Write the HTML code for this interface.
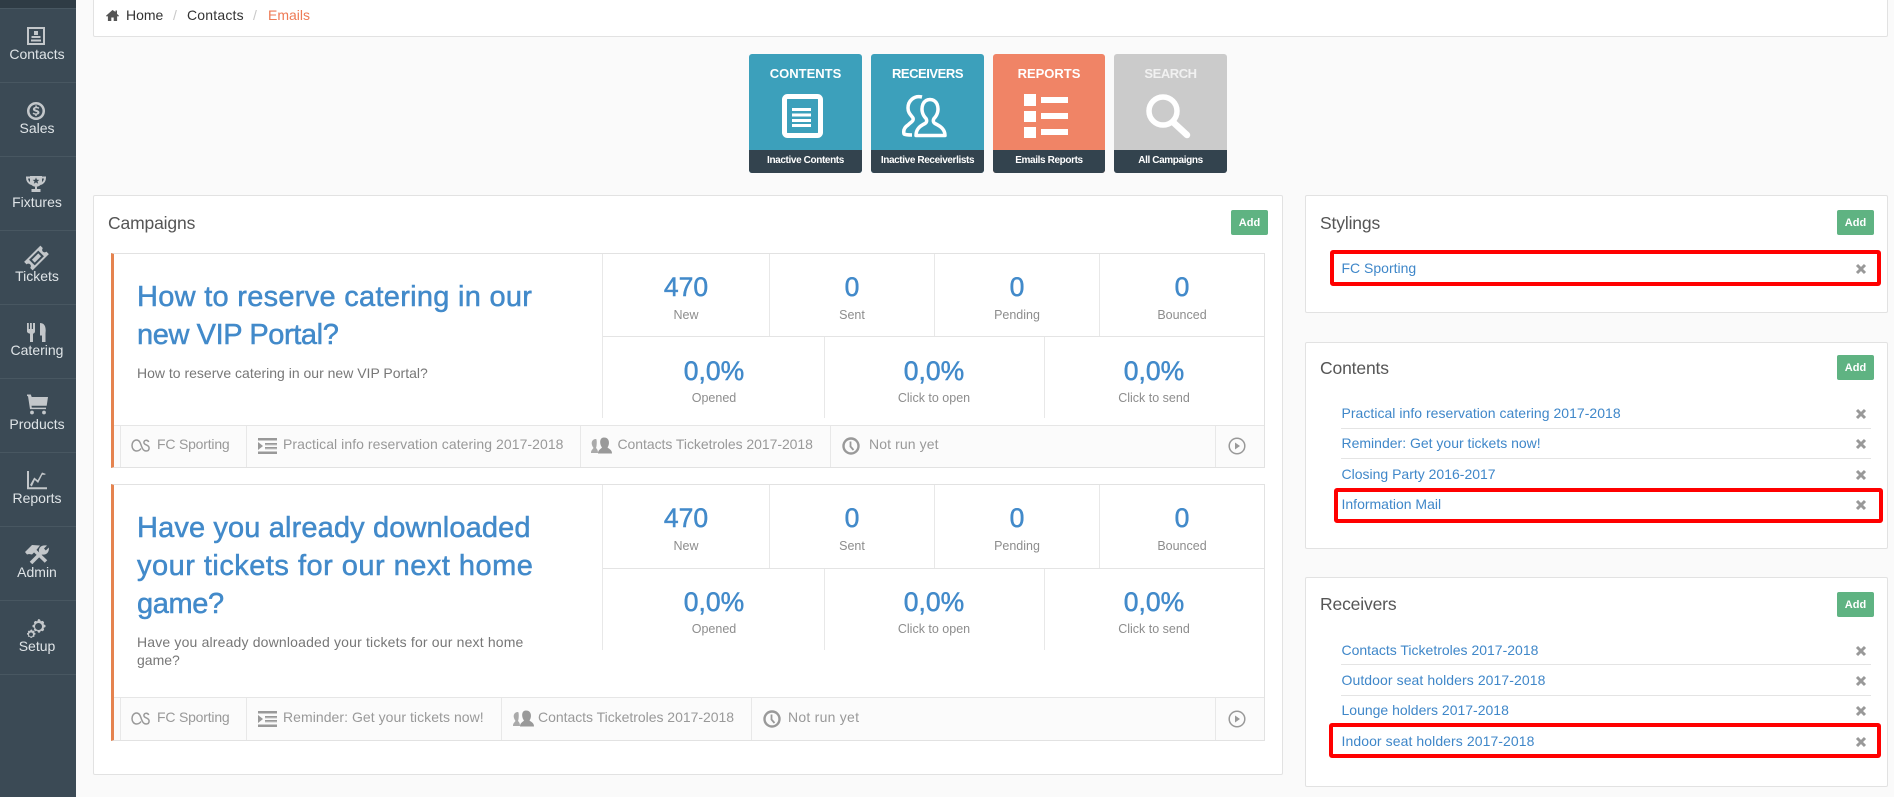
<!DOCTYPE html>
<html><head><meta charset="utf-8"><title>Emails</title>
<style>
html,body{margin:0;padding:0;width:1894px;height:797px;overflow:hidden;background:#fafafa;font-family:"Liberation Sans",sans-serif}
div,span,a,svg{position:absolute;box-sizing:border-box}
.t{white-space:nowrap;line-height:20px;height:20px}
.c{text-align:center;width:240px}
.nav{color:#dfe4e7;font-size:14px;left:-83px;}
.sep{left:0;width:76px;height:1px;background:#485761}
.panel{background:#fff;border:1px solid #e2e2e2;border-radius:2px}
.ptitle{font-size:17.5px;color:#555;letter-spacing:-.15px;line-height:24px;height:24px}
.add{background:#5fb382;color:#fff;font-size:11px;font-weight:bold;text-align:center;line-height:27px;height:25px;width:37px;border-radius:2px}
.tile{top:54px;height:119px;width:113px;border-radius:3px;overflow:hidden}
.tile .foot{left:0;right:0;top:96px;height:23px;background:#33434e;color:#fff;font-size:10px;font-weight:bold;text-align:center;line-height:21px;white-space:nowrap;letter-spacing:-.38px}
.tile .head{left:0;right:0;top:10px;color:#fff;font-size:13px;font-weight:bold;text-align:center;line-height:20px;white-space:nowrap}
.card{left:111px;width:1154px;background:#fff;border-top:1px solid #e2e2e2;border-right:1px solid #e2e2e2;border-bottom:1px solid #e2e2e2;border-left:3px solid #e5834f}
.h{color:#428aca;font-size:29px;line-height:38px;height:38px;white-space:nowrap;-webkit-text-stroke:.5px #428aca}
.sub{color:#777;font-size:14px;line-height:18px;height:18px;white-space:nowrap;left:137px}
.num{color:#428aca;font-size:26.5px;line-height:30px;height:30px;text-align:center;width:200px;-webkit-text-stroke:.5px #428aca}
.lab{color:#8d8d8d;font-size:12.5px;line-height:16px;height:16px;text-align:center;width:200px}
.v{width:1px;background:#e8e8e8}
.hl{height:1px;background:#e4e4e4}
.foot2{left:114px;width:1150px;background:#fbfbfb;border-top:1px solid #e6e6e6}
.f{color:#999;font-size:14px}
.lnk{color:#3f87c9;font-size:14px;left:1341.5px}
.red{border:4px solid #f00;border-radius:3px}
</style></head><body>

<div style="left:0;top:0;width:76px;height:797px;background:#3b4a55"></div>
<div style="left:0;top:0;width:76px;height:8px;background:#2f3c45"></div>
<div class="sep" style="top:8px"></div><div class="sep" style="top:82px"></div><div class="sep" style="top:156px"></div><div class="sep" style="top:230px"></div><div class="sep" style="top:304px"></div><div class="sep" style="top:378px"></div><div class="sep" style="top:452px"></div><div class="sep" style="top:526px"></div><div class="sep" style="top:600px"></div><div class="sep" style="top:674px"></div>

<div class="t c nav" style="top:44px">Contacts</div>
<div class="t c nav" style="top:118px">Sales</div>
<div class="t c nav" style="top:192px">Fixtures</div>
<div class="t c nav" style="top:266px">Tickets</div>
<div class="t c nav" style="top:340px">Catering</div>
<div class="t c nav" style="top:414px">Products</div>
<div class="t c nav" style="top:488px">Reports</div>
<div class="t c nav" style="top:562px">Admin</div>
<div class="t c nav" style="top:636px">Setup</div>

<svg style="left:0;top:0" width="76" height="797" fill="#c3c7ca">
<path fill-rule="evenodd" d="M27 27h18v18H27zM29 29v14h14V29z"/><path d="M34 31h4v4h-4zM31.500 36h9v2h-9zM31 39.500h10v2H31z"/>
<path fill-rule="evenodd" d="M36 102a9 9 0 1 0 .01 0zM36 104.500a6.500 6.500 0 1 1-.01 0z"/><path d="M35.200 105.500h1.600v1.300c1.100.1 2 .4 2.500.9l-.8 1.300c-.6-.5-1.300-.7-2.200-.7-.8 0-1.200.3-1.200.7 0 1.200 4.400.7 4.400 3.500 0 1.300-1 2.100-2.700 2.300v1.200h-1.600v-1.200c-1-.1-2-.5-2.600-1l.8-1.300c.7.500 1.500.9 2.500.9.900 0 1.400-.3 1.400-.8 0-1.300-4.400-.7-4.400-3.400 0-1.200.9-2.100 2.500-2.300z"/>
<path d="M30 176h12v5.500c0 3.200-2.800 5.200-6 5.200s-6-2-6-5.200zM35 186h2v3h-2zM31.500 189h9v3h-9z"/>
<path fill="none" stroke="#c3c7ca" stroke-width="2" d="M30 177.500h-3c0 3.500 1.500 5.500 4.500 6.500M42 177.500h3c0 3.500-1.500 5.500-4.500 6.500"/>
<path fill="#3b4a55" d="M36 177.500l1 2.300 2.400.1-1.900 1.500.7 2.400-2.200-1.400-2.200 1.400.7-2.400-1.900-1.500 2.400-.1z"/>
<g transform="rotate(-45 36.500 258)"><path d="M25 252h23v3.500a2.500 2.500 0 0 0 0 5v3.500H25v-3.500a2.500 2.500 0 0 0 0-5z"/><rect x="30" y="254" width="13" height="8" fill="#3b4a55"/><rect x="32" y="256" width="9" height="4"/></g>
<path d="M27 323h1.800v6h1.200v-6h1.800v6h1.200v-6H35v8.500c0 1-1 1.800-2 2.200V342h-3v-8.300c-1.500-.4-3-1.200-3-2.200zM40 323c2.800 0 5.700 1.500 5.700 7.500l-.2 3-.0 8.500H42v-6.500h-2z"/>
<path d="M27 394.500h3.800l.9 2.500H48l-1.300 8.800H31.500l.3 1.800H46v1.500H30l-2-13H27z"/><circle cx="32" cy="412.500" r="1.900"/><circle cx="44" cy="412.500" r="1.900"/>
<path d="M27 471h2v16.200h18v2H27z"/><path d="M30 485l4.200-7.500 3.500 2.800L42 472.500l4 1.500-1.200.8-2.500 0-4.200 8.200-3.300-3-3 6.500z"/>
<path d="M25 552l7-7 8 .5-4 5-4 4-3-.5-2 .5z"/>
<path fill="none" stroke="#c3c7ca" stroke-width="3.600" d="M33 549l13 12.500M43 551L31 563"/>
<path d="M39 552c-.8-4 2-7.500 8-6.500l-3 3 1.800 2 3-3c.8 4.500-2.500 8-7 7z"/>
<path fill-rule="evenodd" d="M38.500 619l1.500.5.800 1.800 2-.4 1.300 1.300-.5 2 1.900 1-.0 1.800-1.900.9.500 2-1.300 1.300-2-.5-.9 1.900h-1.800l-.9-1.900-2 .5-1.300-1.300.5-2-1.900-.9v-1.800l1.900-1-.5-2 1.300-1.300 2 .5.8-1.900zM38.500 623a3.500 3.500 0 1 0 .01 0z"/><path fill-rule="evenodd" d="M31 629.500l1.100.2.500 1.200 1.200-.3.800.8-.3 1.200 1.200.6v1.200l-1.200.6.300 1.200-.8.800-1.200-.3-.6 1.200H30.500l-.6-1.200-1.200.3-.8-.8.300-1.200-1.200-.6v-1.200l1.200-.6-.3-1.200.8-.8 1.200.3zM31 632.500a2 2 0 1 0 .01 0z"/>
</svg>

<!-- breadcrumb -->
<div class="panel" style="left:93px;top:-2px;width:1795px;height:39px"></div>
<svg style="left:106px;top:9px" width="13" height="12" fill="#555"><path d="M6.500 1L0 6.700l1 1 .9-.8V12h3.400V8.500h2.400V12h3.400V6.900l.9.800 1-1-2-1.800V1.500H9.500v1.400z"/></svg>
<div class="t" style="left:126px;top:5px;font-size:14px;color:#333">Home</div>
<div class="t" style="left:173px;top:5px;font-size:14px;color:#c8c8c8">/</div>
<div class="t" style="left:187px;top:5px;font-size:14px;color:#333;letter-spacing:.2px">Contacts</div>
<div class="t" style="left:253px;top:5px;font-size:14px;color:#c8c8c8">/</div>
<div class="t" style="left:268px;top:5px;font-size:14px;color:#ee7a55">Emails</div>

<!-- tiles -->
<div class="tile" style="left:749px;background:#3ca0bb"><div class="head">CONTENTS</div><div class="foot">Inactive Contents</div>
<svg style="left:0;top:0" width="113" height="96" fill="none" stroke="#fff"><rect x="35.500" y="42.500" width="36" height="39" rx="3" stroke-width="5"/><path d="M43 55.500h19M43 61h19M43 66.500h19M43 71.500h19" stroke-width="3"/></svg></div>
<div class="tile" style="left:871px;background:#3ca0bb"><div class="head" style="letter-spacing:-.45px">RECEIVERS</div><div class="foot">Inactive Receiverlists</div>
<svg style="left:0;top:0" width="113" height="96" fill="none" stroke="#fff" stroke-width="3.500" stroke-linejoin="round"><path d="M45 81.500H74C74 75 69 72 64 69.500C62 68.500 62 66 63 64.500C67 60.500 68 55 66 50C63 44 55 44 52 50C50 55 51 60.500 55 64.500C56 66 56 68.500 54 69.500C49 72 45 75 45 81.500Z"/><path d="M51 43C43 41 37 47 37 54C37 59 40 61 42 64C43 67 40 68 37 71C34 73 32 76 33 80C35 81 38 81 41 81"/></svg></div>
<div class="tile" style="left:993px;width:112px;background:#f08466"><div class="head">REPORTS</div><div class="foot">Emails Reports</div>
<svg style="left:0;top:0" width="112" height="96" fill="#fff"><path d="M31 40h12v12H31zM31 57h12v11H31zM31 73h12v11H31zM48 43h27v6H48zM48 59h27v6H48zM48 75h27v6H48z"/></svg></div>
<div class="tile" style="left:1114px;background:#cbcbcb"><div class="head" style="color:#f1f1f1;letter-spacing:-.45px">SEARCH</div><div class="foot">All Campaigns</div>
<svg style="left:0;top:0" width="113" height="96" fill="none" stroke="#fff"><circle cx="49" cy="57" r="14" stroke-width="5.500"/><path d="M60 69l13 12" stroke-width="6.500" stroke-linecap="round"/></svg></div>

<!-- campaigns panel -->
<div class="panel" style="left:93px;top:195px;width:1190px;height:580px"></div>
<div class="t ptitle" style="left:108px;top:211px">Campaigns</div>
<div class="add" style="left:1231px;top:210px">Add</div>

<!-- card 1 -->
<div class="card" style="top:253px;height:215px"></div>
<div class="h" style="left:137px;top:278px;letter-spacing:.28px">How to reserve catering in our</div>
<div class="h" style="left:137px;top:316px;letter-spacing:-.4px">new VIP Portal?</div>
<div class="sub" style="top:364px">How to reserve catering in our new VIP Portal?</div>
<div class="v" style="left:602px;top:254px;height:164px"></div>
<div class="v" style="left:769px;top:254px;height:82px"></div><div class="v" style="left:934px;top:254px;height:82px"></div><div class="v" style="left:1099px;top:254px;height:82px"></div>
<div class="hl" style="left:603px;top:336px;width:661px"></div>
<div class="v" style="left:824px;top:337px;height:81px"></div><div class="v" style="left:1044px;top:337px;height:81px"></div>
<div class="num" style="left:586px;top:272px">470</div><div class="num" style="left:752px;top:272px">0</div><div class="num" style="left:917px;top:272px">0</div><div class="num" style="left:1082px;top:272px">0</div>
<div class="lab" style="left:586px;top:307px">New</div><div class="lab" style="left:752px;top:307px">Sent</div><div class="lab" style="left:917px;top:307px">Pending</div><div class="lab" style="left:1082px;top:307px">Bounced</div>
<div class="num" style="left:614px;top:356px">0,0%</div><div class="num" style="left:834px;top:356px">0,0%</div><div class="num" style="left:1054px;top:356px">0,0%</div>
<div class="lab" style="left:614px;top:390px">Opened</div><div class="lab" style="left:834px;top:390px">Click to open</div><div class="lab" style="left:1054px;top:390px">Click to send</div>
<div class="foot2" style="top:425px;height:42px"></div>
<div class="v" style="left:120px;top:426px;height:41px"></div><div class="v" style="left:246px;top:426px;height:41px"></div><div class="v" style="left:580px;top:426px;height:41px"></div><div class="v" style="left:830px;top:426px;height:41px"></div><div class="v" style="left:1215px;top:426px;height:41px"></div>
<div class="t f" style="left:157px;top:434px;letter-spacing:-.2px">FC Sporting</div>
<div class="t f" style="left:283px;top:434px;letter-spacing:.06px">Practical info reservation catering 2017-2018</div>
<div class="t f" style="left:617.500px;top:434px;letter-spacing:-.05px">Contacts Ticketroles 2017-2018</div>
<div class="t f" style="left:869px;top:434px;letter-spacing:.1px">Not run yet</div>

<!-- card 2 -->
<div class="card" style="top:484px;height:257px"></div>
<div class="h" style="left:137px;top:509px;letter-spacing:.13px">Have you already downloaded</div>
<div class="h" style="left:137px;top:547px;letter-spacing:.48px">your tickets for our next home</div>
<div class="h" style="left:137px;top:585px;letter-spacing:-.4px">game?</div>
<div class="sub" style="top:633px;letter-spacing:.17px">Have you already downloaded your tickets for our next home</div>
<div class="sub" style="top:651px">game?</div>
<div class="v" style="left:602px;top:485px;height:165px"></div>
<div class="v" style="left:769px;top:485px;height:83px"></div><div class="v" style="left:934px;top:485px;height:83px"></div><div class="v" style="left:1099px;top:485px;height:83px"></div>
<div class="hl" style="left:603px;top:568px;width:661px"></div>
<div class="v" style="left:824px;top:569px;height:81px"></div><div class="v" style="left:1044px;top:569px;height:81px"></div>
<div class="num" style="left:586px;top:503px">470</div><div class="num" style="left:752px;top:503px">0</div><div class="num" style="left:917px;top:503px">0</div><div class="num" style="left:1082px;top:503px">0</div>
<div class="lab" style="left:586px;top:538px">New</div><div class="lab" style="left:752px;top:538px">Sent</div><div class="lab" style="left:917px;top:538px">Pending</div><div class="lab" style="left:1082px;top:538px">Bounced</div>
<div class="num" style="left:614px;top:587px">0,0%</div><div class="num" style="left:834px;top:587px">0,0%</div><div class="num" style="left:1054px;top:587px">0,0%</div>
<div class="lab" style="left:614px;top:621px">Opened</div><div class="lab" style="left:834px;top:621px">Click to open</div><div class="lab" style="left:1054px;top:621px">Click to send</div>
<div class="foot2" style="top:697px;height:43px"></div>
<div class="v" style="left:120px;top:698px;height:42px"></div><div class="v" style="left:246px;top:698px;height:42px"></div><div class="v" style="left:501px;top:698px;height:42px"></div><div class="v" style="left:751px;top:698px;height:42px"></div><div class="v" style="left:1215px;top:698px;height:42px"></div>
<div class="t f" style="left:157px;top:707px;letter-spacing:-.2px">FC Sporting</div>
<div class="t f" style="left:283px;top:707px;letter-spacing:.05px">Reminder: Get your tickets now!</div>
<div class="t f" style="left:538px;top:707px;letter-spacing:-.03px">Contacts Ticketroles 2017-2018</div>
<div class="t f" style="left:788px;top:707px;letter-spacing:.25px">Not run yet</div>

<!-- footer icons -->
<svg style="left:0;top:0" width="1300" height="797" fill="none">
<path d="M141 448.500c-1 1.500-2.200 2.500-4.500 2.500-2.600 0-4.500-2.500-4.500-5.500s1.900-5.500 4.500-5.500c3.500 0 4 4 5.300 7 .9 2.500 2.200 4 4.300 4 1.900 0 3-1 3-3 0-3.500-5.200-2.500-5.200-5.500 0-1.500 1.100-2.300 2.400-2.300 1.100 0 2 .6 2.400 1.800" stroke="#999" stroke-width="1.500"/>
<path d="M258 438h19v2.500h-19zM265 443h12v2h-12zM265 447h12v2h-12zM258 451.500h19v2.500h-19zM258 442v8l5-4z" fill="#999"/><path d="M265 445h12M265 449h12" stroke="#ccc"/>
<g transform="translate(0,-5)"><path d="M596 444c-3.500 0-5 3-4 6 .3 1.200 1 2 1.500 3-1 1.500-2.500 2-2.500 5h7c0-3-1-4-2-5 1-2.500 1-9 0-9z" fill="#aaa"/><path d="M604 442.500c-3.200 0-4.500 3-3.500 7 .4 1.500 1 2.200 1.500 3-1 1.500-4 2-4 6h14c0-4-3-4.500-4.500-6 2.300-3 2.500-10-3.500-10z" fill="#999"/></g>
<circle cx="851" cy="446" r="7.500" stroke="#999" stroke-width="2.400"/><path d="M850.500 441.500v5l3 3.500" stroke="#999" stroke-width="1.800"/>
<circle cx="1237" cy="446" r="7.800" stroke="#999" stroke-width="1.500"/><path d="M1235 442.500v7l5-3.500z" fill="#999"/>
<g transform="translate(0,273)">
<path d="M141 448.500c-1 1.500-2.200 2.500-4.500 2.500-2.600 0-4.500-2.500-4.500-5.500s1.900-5.500 4.500-5.500c3.500 0 4 4 5.300 7 .9 2.500 2.200 4 4.300 4 1.900 0 3-1 3-3 0-3.500-5.200-2.500-5.200-5.500 0-1.500 1.100-2.300 2.400-2.300 1.100 0 2 .6 2.400 1.800" stroke="#999" stroke-width="1.500"/>
<path d="M258 438h19v2.500h-19zM265 443h12v2h-12zM265 447h12v2h-12zM258 451.500h19v2.500h-19zM258 442v8l5-4z" fill="#999"/><path d="M265 445h12M265 449h12" stroke="#ccc"/>
<g transform="translate(-78,-5)"><path d="M596 444c-3.500 0-5 3-4 6 .3 1.200 1 2 1.500 3-1 1.500-2.500 2-2.500 5h7c0-3-1-4-2-5 1-2.500 1-9 0-9z" fill="#aaa"/><path d="M604 442.500c-3.200 0-4.500 3-3.500 7 .4 1.500 1 2.200 1.500 3-1 1.500-4 2-4 6h14c0-4-3-4.500-4.500-6 2.300-3 2.500-10-3.500-10z" fill="#999"/></g>
<g transform="translate(-79,0)"><circle cx="851" cy="446" r="7.500" stroke="#999" stroke-width="2.400"/><path d="M850.500 441.500v5l3 3.500" stroke="#999" stroke-width="1.800"/></g>
<circle cx="1237" cy="446" r="7.800" stroke="#999" stroke-width="1.500"/><path d="M1235 442.500v7l5-3.500z" fill="#999"/>
</g>
</svg>

<!-- right panels -->
<div class="panel" style="left:1305px;top:195px;width:583px;height:118px"></div>
<div class="t ptitle" style="left:1320px;top:211px">Stylings</div>
<div class="add" style="left:1837px;top:210px">Add</div>
<div class="t lnk" style="top:258px">FC Sporting</div>
<div class="red" style="left:1330px;top:250px;width:551px;height:36px"></div>

<div class="panel" style="left:1305px;top:342px;width:583px;height:207px"></div>
<div class="t ptitle" style="left:1320px;top:356px">Contents</div>
<div class="add" style="left:1837px;top:355px">Add</div>
<div class="t lnk" style="top:403px;letter-spacing:.03px">Practical info reservation catering 2017-2018</div>
<div class="hl" style="left:1341px;top:428px;width:530px"></div>
<div class="t lnk" style="top:433px">Reminder: Get your tickets now!</div>
<div class="hl" style="left:1341px;top:458px;width:530px"></div>
<div class="t lnk" style="top:464px">Closing Party 2016-2017</div>
<div class="t lnk" style="top:494px">Information Mail</div>
<div class="red" style="left:1334px;top:488px;width:549px;height:35px"></div>

<div class="panel" style="left:1305px;top:577px;width:583px;height:210px"></div>
<div class="t ptitle" style="left:1320px;top:592px">Receivers</div>
<div class="add" style="left:1837px;top:592px">Add</div>
<div class="t lnk" style="top:640px">Contacts Ticketroles 2017-2018</div>
<div class="hl" style="left:1341px;top:664px;width:530px"></div>
<div class="t lnk" style="top:670px;letter-spacing:.08px">Outdoor seat holders 2017-2018</div>
<div class="hl" style="left:1341px;top:695px;width:530px"></div>
<div class="t lnk" style="top:700px">Lounge holders 2017-2018</div>
<div class="t lnk" style="top:731px;letter-spacing:.08px">Indoor seat holders 2017-2018</div>
<div class="red" style="left:1329px;top:723px;width:552px;height:35px"></div>

<svg style="left:1850px;top:250px" width="24" height="510" stroke="#999" stroke-width="3" fill="none">
<path d="M7 15l8 8M15 15l-8 8M7 160l8 8M15 160l-8 8M7 190l8 8M15 190l-8 8M7 221l8 8M15 221l-8 8M7 251l8 8M15 251l-8 8M7 397l8 8M15 397l-8 8M7 427l8 8M15 427l-8 8M7 457l8 8M15 457l-8 8M7 488l8 8M15 488l-8 8"/>
</svg>
</body></html>
